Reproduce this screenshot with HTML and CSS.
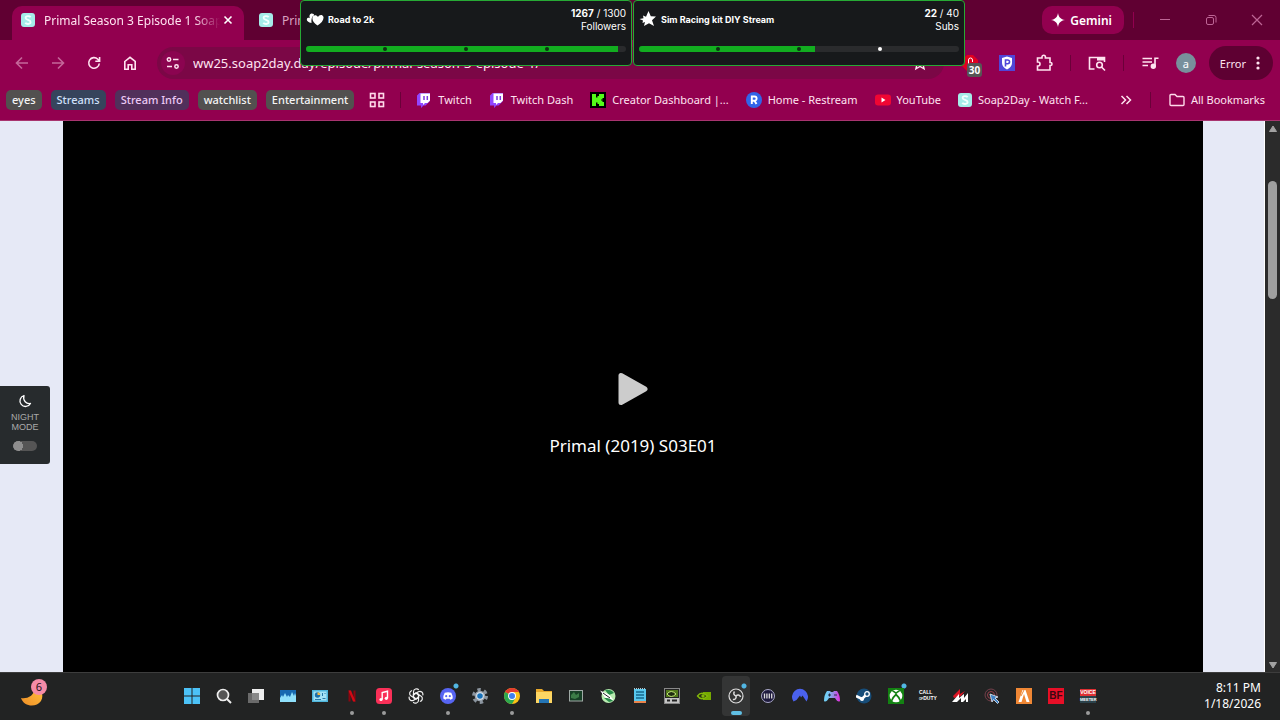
FILE: index.html
```html
<!DOCTYPE html>
<html lang="en">
<head>
    <meta charset="UTF-8">
    <meta name="viewport" content="width=device-width, initial-scale=1.0">
    <title>Primal Season 3 Episode 1 Soap2Day</title>
    <link rel="stylesheet" href="styles.css">
</head>
<body>

<!-- shared shapes -->
<svg class="defs" aria-hidden="true">
    <symbol id="soap" viewBox="0 0 14 14">
        <rect width="14" height="14" rx="3" fill="#a5ece9"/>
        <path d="M9.6 4.2C8.800 2.800 4.600 2.600 4.600 5c0 2.300 5 1.600 5 4.100 0 2.500-4.400 2.300-5.300.7" fill="none" stroke="#f2ffff" stroke-width="1.800"/>
    </symbol>
    <symbol id="twitch" viewBox="0 0 16 16">
        <path d="M1 3.500 3.500 1H14v8l-4.500 4.500H7.500L5 16v-2.500H1z" fill="#9146ff"/>
        <path d="M4.500 1.500H14V8.500l-2.500 2.500H9L7 13v-2H4.500z" fill="#fff"/>
        <path d="M8 4v4M11.300 4v4" stroke="#7a3ae0" stroke-width="1.500"/>
    </symbol>
</svg>

<div class="desktop">
    <header class="tabstrip">
        <div class="tab active">
            <svg class="favicon"><use href="#soap"/></svg>
            <span class="tab-title">Primal Season 3 Episode 1 Soap</span>
            <button class="tab-close" aria-label="Close tab"><svg width="10" height="10" viewBox="0 0 10 10"><path d="M1.500 1.500l7 7M8.500 1.500l-7 7" stroke="#fff" stroke-width="1.600"/></svg></button>
        </div>
        <div class="tab">
            <svg class="favicon"><use href="#soap"/></svg>
            <span class="tab-title">Prim</span>
        </div>
        <button class="gemini">
            <svg width="14" height="14" viewBox="0 0 14 14"><path d="M7 0c.7 4.300 2.700 6.300 7 7-4.300.7-6.300 2.700-7 7-.7-4.300-2.700-6.300-7-7 4.300-.7 6.300-2.700 7-7z" fill="#fff"/></svg>
            Gemini
        </button>
        <span class="divider strip-divider"></span>
        <div class="window-buttons">
            <button aria-label="Minimize"><svg width="12" height="12"><path d="M1 5.500h10" stroke="#bd6595"/></svg></button>
            <button aria-label="Restore"><svg width="12" height="12" fill="none" stroke="#bd6595"><rect x="1.500" y="3.500" width="7" height="7" rx="1.500"/><path d="M3.500 1.500h5.500a2 2 0 0 1 2 2v5"/></svg></button>
            <button aria-label="Close"><svg width="12" height="12"><path d="M1 1l10 10M11 1L1 11" stroke="#bd6595" stroke-width="1.200"/></svg></button>
        </div>
    </header>

    <nav class="toolbar">
        <button class="icon-button dim" aria-label="Back"><svg viewBox="0 0 16 16"><path d="M14 8H3M8 2.500L2.500 8 8 13.500"/></svg></button>
        <button class="icon-button dim" aria-label="Forward"><svg viewBox="0 0 16 16"><path d="M2 8h11M8 2.500L13.500 8 8 13.500"/></svg></button>
        <button class="icon-button" aria-label="Reload"><svg viewBox="0 0 16 16"><path d="M13.300 8.500A5.300 5.300 0 1 1 11.800 4.200L13.300 5.800M13.600 2v4.300H9.300"/></svg></button>
        <button class="icon-button" aria-label="Home"><svg viewBox="0 0 16 16"><path d="M2.800 6.500L8 2.300l5.200 4.200v7.700H9.800V9.800H6.200v4.400H2.800z"/></svg></button>
        <div class="omnibox">
            <button class="site-info" aria-label="Site information"><svg width="16" height="16" viewBox="0 0 16 16" fill="none" stroke="#ffe3f0" stroke-width="1.500"><circle cx="4" cy="4.500" r="1.700"/><path d="M8 4.500h5.500M2 11.500h5"/><circle cx="11.500" cy="11.500" r="1.700"/></svg></button>
            <input class="url" type="text" aria-label="Address" value="ww25.soap2day.day/episode/primal-season-3-episode-1/">
            <button class="star" aria-label="Bookmark this tab"><svg width="16" height="16" viewBox="0 0 16 16" fill="none" stroke="#ffe3f0" stroke-width="1.400"><path d="M8 1.500l1.900 4.300 4.600.4-3.500 3.100 1.100 4.600L8 11.500l-4.100 2.400L5 9.300 1.500 6.200l4.600-.4z"/></svg></button>
        </div>
        <div class="extensions">
            <button class="blocker" aria-label="Ad blocker">
                <svg width="16" height="16" viewBox="0 0 16 16"><path d="M5 0h6l5 5v6l-5 5H5l-5-5V5z" fill="#e0001f"/><path d="M6.500 9V5a2 2 0 0 1 4 0v2" fill="none" stroke="#fff"/></svg>
                <span class="count">30</span>
            </button>
            <button class="icon-button" aria-label="Password shield"><svg viewBox="0 0 16 16"><rect width="16" height="16" fill="#5046d8" stroke="none"/><path d="M3 3l5-1.500L13 3v5c0 3-2 5-5 6.500C5 13 3 11 3 8z" fill="#fff" stroke="none"/><path d="M6.500 11.500V5h2.200a1.800 1.800 0 0 1 0 3.700H6.500" stroke="#5046d8"/></svg></button>
            <button class="icon-button" aria-label="Extensions"><svg class="big" viewBox="0 0 18 18"><path d="M2.500 4H7V3a1.700 1.700 0 0 1 3.400 0v1H15v4.500h.5a1.500 1.500 0 0 1 0 3H15V16H2.500v-4H3a2 2 0 0 0 0-4h-.5z"/></svg></button>
            <span class="divider"></span>
            <button class="icon-button" aria-label="Search this page"><svg class="big" viewBox="0 0 18 18"><path d="M6.500 15H1.500V3.500h15V8"/><path d="M9 3v3.500h7.500V3z" fill="#ffe3f0" stroke="none"/><circle cx="11.500" cy="11" r="2.800"/><path d="M13.500 13l3.500 3.500"/></svg></button>
            <span class="divider"></span>
            <button class="icon-button" aria-label="Media controls"><svg class="big" viewBox="0 0 18 18"><path d="M1.500 4.500H11M1.500 8H11M1.500 11.500h5.500M14 12V4.300h3.500"/><circle cx="12.300" cy="12.300" r="1.900" fill="#ffe3f0"/></svg></button>
            <button class="avatar" aria-label="Profile">a</button>
            <button class="error-menu">Error
                <svg width="4" height="16" viewBox="0 0 4 16" fill="#ffe3f0"><circle cx="2" cy="3" r="1.600"/><circle cx="2" cy="8" r="1.600"/><circle cx="2" cy="13" r="1.600"/></svg>
            </button>
        </div>
    </nav>

    <nav class="bookmarks">
        <div class="groups">
            <button class="chip gray">eyes</button>
            <button class="chip blue">Streams</button>
            <button class="chip purple">Stream Info</button>
            <button class="chip gray">watchlist</button>
            <button class="chip gray">Entertainment</button>
        </div>
        <button class="apps" aria-label="Apps"><svg width="16" height="16" viewBox="0 0 16 16" fill="none" stroke="#ffd9ea" stroke-width="1.600"><rect x="1.500" y="1.500" width="4.500" height="4.500"/><rect x="10" y="1.500" width="4.500" height="4.500"/><rect x="1.500" y="10" width="4.500" height="4.500"/><rect x="10" y="10" width="4.500" height="4.500"/></svg></button>
        <span class="divider"></span>
        <div class="links">
            <a href="#"><svg><use href="#twitch"/></svg>Twitch</a>
            <a href="#"><svg><use href="#twitch"/></svg>Twitch Dash</a>
            <a href="#"><svg viewBox="0 0 16 16"><rect width="16" height="16" fill="#000"/><path d="M2 2h4v3.500h1.500V4H9V2h5v4h-1.500v1.500H11v1h1.500V10H14v4H9v-2H7.500v-1.500H6V14H2z" fill="#53fc18"/></svg>Creator Dashboard |...</a>
            <a href="#"><svg viewBox="0 0 16 16"><circle cx="8" cy="8" r="8" fill="#3264e8"/><path d="M5.800 12V4.500h2.700a2 2 0 0 1 0 4.200H6M8.500 8.700l2 3.300" fill="none" stroke="#fff" stroke-width="1.900"/></svg>Home - Restream</a>
            <a href="#"><svg viewBox="0 0 16 16"><rect y="2.500" width="16" height="11" rx="3" fill="#f00633"/><path d="M6.500 5.500l4 2.500-4 2.500z" fill="#fff"/></svg>YouTube</a>
            <a href="#"><svg class="favicon"><use href="#soap"/></svg>Soap2Day - Watch F...</a>
        </div>
        <button class="more" aria-label="More bookmarks"><svg width="12" height="10" viewBox="0 0 12 10" fill="none" stroke="#ffe3f0" stroke-width="1.500"><path d="M1.500 1l4 4-4 4M6.500 1l4 4-4 4"/></svg></button>
        <span class="divider"></span>
        <a class="all" href="#"><svg viewBox="0 0 16 16" fill="none" stroke="#ffd9ea" stroke-width="1.400"><path d="M1 3.500a1 1 0 0 1 1-1h4l2 2h6a1 1 0 0 1 1 1v7a1 1 0 0 1-1 1H2a1 1 0 0 1-1-1z"/></svg>All Bookmarks</a>
    </nav>

    <main class="page">
        <label class="night-mode" for="night">
            <svg width="14" height="14" viewBox="0 0 14 14"><path d="M6 1.500a5.600 5.600 0 1 0 6.500 8C8.500 10.500 4.500 6.500 6 1.500z" fill="none" stroke="#fff" stroke-width="1.300" stroke-linejoin="round"/></svg>
            <span>NIGHT<br>MODE</span>
            <input type="checkbox" id="night">
        </label>
        <section class="player">
            <button class="play" aria-label="Play"><svg width="30" height="34" viewBox="0 0 30 34"><path d="M3 3.500v27L27 17z" fill="#ccc" stroke="#ccc" stroke-width="5" stroke-linejoin="round"/></svg></button>
            <h1>Primal (2019) S03E01</h1>
        </section>
        <div class="scrollbar">
            <svg width="10" height="8" viewBox="0 0 10 8"><path d="M5 1l3.500 5.500h-7z" fill="#a2a2a2" stroke="#a2a2a2" stroke-linejoin="round"/></svg>
            <div class="track"><div class="thumb"></div></div>
            <svg width="10" height="8" viewBox="0 0 10 8"><path d="M5 7l3.500-5.500h-7z" fill="#a2a2a2" stroke="#a2a2a2" stroke-linejoin="round"/></svg>
        </div>
    </main>

    <footer class="taskbar">
        <button class="weather" aria-label="Weather">
            <svg width="24" height="20" viewBox="0 0 24 20"><defs><linearGradient id="moon" x1="0" y1="1" x2="1" y2="0"><stop offset="0" stop-color="#ef8d27"/><stop offset="1" stop-color="#ffc23d"/></linearGradient></defs><path d="M0 12c5 1 14-1 14-12 7 3 9 10 6 15-5 7-17 6-20-3z" fill="url(#moon)"/></svg>
            <span class="alerts">6</span>
        </button>
        <div class="apps-row">
            <button class="app" aria-label="Start"><svg viewBox="0 0 16 16" fill="#4cc2f7"><path d="M0 0h7.500v7.500H0zM8.500 0H16v7.500H8.500zM0 8.500h7.500V16H0zM8.500 8.500H16V16H8.500z"/></svg></button>
            <button class="app" aria-label="Search"><svg viewBox="0 0 16 16"><circle cx="7" cy="7" r="5.500" fill="#555" stroke="#eee" stroke-width="1.700"/><path d="M11 11l4 4" stroke="#eee" stroke-width="2"/></svg></button>
            <button class="app" aria-label="Task view"><svg viewBox="0 0 16 16"><rect x="4" y="1" width="12" height="11" fill="#eee"/><rect y="5" width="11" height="10" fill="#777" opacity=".85"/></svg></button>
            <button class="app" aria-label="Task manager"><svg viewBox="0 0 16 16"><rect y="2" width="16" height="12" fill="#1769b0"/><path d="M0 14V10l2-3 1 2 2-4 2 4 1-2 2 2 2-5 2 4 1-3 1 3v6z" fill="#8fe0fb"/></svg></button>
            <button class="app" aria-label="Control panel"><svg viewBox="0 0 16 16"><rect y="2" width="16" height="12" fill="#4eb6dc"/><rect x="1.500" y="3.500" width="13" height="9" fill="#a5e2f5"/><circle cx="5.500" cy="7" r="2.700" fill="#1b6fab"/><path d="M5.500 7V4.300A2.700 2.700 0 0 1 8.200 7z" fill="#f5b942"/><path d="M3 11.500h6M10.500 5v3M13 5v1M10.500 10.500h3" stroke="#287aa9"/></svg></button>
            <button class="app running" aria-label="Netflix"><svg viewBox="0 0 16 16"><path d="M5.500 2.500v11M10.500 2.500v11" stroke="#8a0710" stroke-width="2"/><path d="M4.500 2.500h2.500l4.500 11H9z" fill="#d40914"/></svg></button>
            <button class="app running" aria-label="Music"><svg viewBox="0 0 16 16"><rect width="16" height="16" rx="3.500" fill="#fa3058"/><path d="M6.200 11.500V4.500l5.300-1.300v7" fill="none" stroke="#fff" stroke-width="1.400"/><circle cx="5" cy="11.500" r="1.600" fill="#fff"/><circle cx="10.300" cy="10.300" r="1.600" fill="#fff"/></svg></button>
            <button class="app" aria-label="ChatGPT"><svg viewBox="0 0 16 16" fill="none" stroke="#f2f2f2" stroke-width="1.200"><g id="petal"><path d="M8 5.200L5.500 6.600V3.800a3 3 0 0 1 5.300-1.900M5.500 6.600v3L8 11"/></g><use href="#petal" transform="rotate(60 8 8)"/><use href="#petal" transform="rotate(120 8 8)"/><use href="#petal" transform="rotate(180 8 8)"/><use href="#petal" transform="rotate(240 8 8)"/><use href="#petal" transform="rotate(300 8 8)"/></svg></button>
            <button class="app running notify" aria-label="Discord"><svg viewBox="0 0 16 16"><circle cx="8" cy="8" r="8" fill="#5765f2"/><path d="M4.700 4.800Q8 3.700 11.300 4.800 13 8 12.700 10.500q-1.200 1-2.500 1.200l-.6-1H6.400l-.6 1Q4.500 11.500 3.300 10.500 3 8 4.700 4.800z" fill="#fff"/><circle cx="6.200" cy="8.200" r="1.100" fill="#5765f2"/><circle cx="9.800" cy="8.200" r="1.100" fill="#5765f2"/></svg></button>
            <button class="app" aria-label="Settings"><svg viewBox="0 0 16 16"><circle cx="8" cy="8" r="6.500" fill="none" stroke="#8b949e" stroke-width="3" stroke-dasharray="3.400 3.400"/><circle cx="8" cy="8" r="5.300" fill="#9aa3ad"/><circle cx="8" cy="8" r="3.700" fill="#e6eef5"/><circle cx="8" cy="8" r="2.800" fill="#1770b8"/></svg></button>
            <button class="app running" aria-label="Chrome"><svg viewBox="0 0 16 16"><circle cx="8" cy="8" r="8" fill="#fbc116"/><path d="M8 8L1.100 4A8 8 0 0 1 14.900 4z" fill="#e33b2e"/><path d="M8 8L1.100 4A8 8 0 0 0 8 16l3.500-6z" fill="#2da94f"/><path d="M8 4h6.900L11 9z" fill="#fbc116"/><circle cx="8" cy="8" r="4" fill="#fff"/><circle cx="8" cy="8" r="3" fill="#3f80ee"/></svg></button>
            <button class="app" aria-label="File Explorer"><svg viewBox="0 0 16 16"><path d="M0 1h6l2 2h8v12H0z" fill="#e9a92b"/><path d="M0 4h16v11H0z" fill="#fdd663"/><path d="M3 15v-4h10v4z" fill="#2475b5"/></svg></button>
            <button class="app" aria-label="Monitor"><svg viewBox="0 0 16 16"><rect x="1.500" y="2.500" width="13" height="10.500" fill="#174026" stroke="#9fa9a5"/><path d="M3 7l3-3 2 3 3-2v4l-4 2-4-1z" fill="#3b7c47"/></svg></button>
            <button class="app" aria-label="Tuner"><svg viewBox="0 0 16 16"><circle cx="8.500" cy="8" r="7" fill="#b9ecb0"/><path d="M5 2q6-1 9 3L9 7zM4 10l5 4 4-1-3-3z" fill="#288b4a"/><path d="M0 2.500l9 4 5 6-5-2-4-1z" fill="#fff"/><path d="M3 5l7 5" stroke="#222"/></svg></button>
            <button class="app" aria-label="Notepad"><svg viewBox="0 0 16 16"><rect x="2" y="1" width="12" height="12" fill="#57c7ed"/><path d="M4 4h8M4 7h8M4 10h8" stroke="#17698d" stroke-width="1.300"/><path d="M2 13h12v2H2z" fill="#e8834b"/><path d="M2 .7h12" stroke="#d4edf5" stroke-dasharray="1 1"/></svg></button>
            <button class="app" aria-label="Nvidia control"><svg viewBox="0 0 16 16"><rect x=".5" y=".5" width="15" height="15" fill="#222" stroke="#888"/><path d="M2 2h12v7H2z" fill="#507719"/><path d="M3 6q4-5 9 0-5 5-9 0z" fill="#1f2b10" stroke="#c3e47a"/><path d="M1 10h14v5H1z" fill="#c4c4c4"/><path d="M3 12.500h3M8 12.500h5" stroke="#222" stroke-width="2"/></svg></button>
            <button class="app" aria-label="Nvidia"><svg viewBox="0 0 16 16"><path d="M7 4h8v8H7z" fill="#76a900"/><path d="M1.500 8q4-5.500 10 0-6 5.500-10 0z" fill="#293410" stroke="#83b80a" stroke-width="1.300"/><circle cx="7" cy="8" r="1.700" fill="#83b80a"/></svg></button>
            <button class="app current notify" aria-label="OBS Studio"><svg viewBox="0 0 16 16" fill="none" stroke="#ddd"><circle cx="8" cy="8" r="7" stroke-width="1.200"/><path id="blade" d="M8 8C6 7.500 5 5.500 6.500 3.500" stroke-width="1.500"/><use href="#blade" transform="rotate(120 8 8)"/><use href="#blade" transform="rotate(240 8 8)"/></svg></button>
            <button class="app" aria-label="Audio mixer"><svg viewBox="0 0 16 16"><circle cx="8" cy="8" r="6.500" fill="#1e1a3d" stroke="#aaa9c9"/><path d="M4.500 5.500v5M6.900 5.500v5M9.300 5.500v5M11.700 5.500v5" stroke="#ddd" stroke-width="1.300"/></svg></button>
            <button class="app" aria-label="NordVPN"><svg viewBox="0 0 16 16"><path d="M1.500 13.500A8 8 0 1 1 14.500 13.500L10.500 7.500 9 9.500 8 7.500 4.500 12z" fill="#4a61ed"/></svg></button>
            <button class="app" aria-label="Controller"><svg viewBox="0 0 16 16"><defs><linearGradient id="pad"><stop offset=".2" stop-color="#72cdf4"/><stop offset=".6" stop-color="#9b86e5"/><stop offset="1" stop-color="#e72bdf"/></linearGradient></defs><path d="M3 3h3l1 1h2l1-1h3q3 4 3 10-2 2-5-3H5q-3 5-5 3 0-6 3-10z" fill="url(#pad)"/><path d="M4 7h3M5.500 5.500v3M10 7h3" stroke="#253044"/></svg></button>
            <button class="app" aria-label="Steam"><svg viewBox="0 0 16 16"><circle cx="8" cy="8" r="7.500" fill="#174d79"/><path d="M0 8l6 3 5-5" stroke="#fff" stroke-width="2.600" fill="none"/><circle cx="11" cy="6" r="2.300" fill="#174d79" stroke="#fff" stroke-width="1.300"/><circle cx="6" cy="11" r="2" fill="#fff"/></svg></button>
            <button class="app notify" aria-label="Xbox"><svg viewBox="0 0 16 16"><rect width="16" height="16" fill="#138212"/><circle cx="8" cy="8" r="6.300" fill="#fff"/><path d="M3.500 13Q5 9 8 6.500 11 9 12.500 13M4.500 3Q6.500 3.500 8 5.200 9.500 3.500 11.500 3" fill="none" stroke="#138212" stroke-width="1.700"/></svg></button>
            <button class="app word cod" aria-label="Call of Duty"><span>CALL</span><span><small>OF</small>DUTY</span></button>
            <button class="app" aria-label="Assetto Corsa"><svg viewBox="0 0 16 16"><path d="M1 8l7-7v5l5-3-4 5-7 2z" fill="#db1524"/><path d="M0 14L7 6v4l5-4v4l4-5v9h-2v-3l-3 3H9v-4l-4 4z" fill="#fff"/></svg></button>
            <button class="app" aria-label="Auto clicker"><svg viewBox="0 0 16 16"><circle cx="7" cy="7" r="6" fill="none" stroke="#74404b"/><circle cx="7" cy="7" r="3.500" fill="none" stroke="#963e4b"/><path d="M6 6l8 3-3 1 4 4-1.500 1.500-4-4L8 14z" fill="#3f82c5" stroke="#e7eef5" stroke-width=".8"/></svg></button>
            <button class="app" aria-label="FiveM"><svg viewBox="0 0 16 16"><rect width="16" height="16" fill="#ef8735"/><path d="M2.500 14L6.500 2h3l4 12h-3L8 6l-2.500 8z" fill="#fff"/><path d="M8 2l-3 6" stroke="#ef8735"/></svg></button>
            <button class="app word bf" aria-label="Battlefield"><span>BF</span></button>
            <button class="app word voice running" aria-label="Voicemeeter"><span>VOICE</span><span>MEETER</span></button>
        </div>
        <time class="clock" datetime="2026-01-18T20:11">8:11 PM<br>1/18/2026</time>
    </footer>

    <!-- stream goals sit over the browser window -->
    <aside class="goals">
        <section class="goal">
            <div class="goal-head">
                <svg width="18" height="16" viewBox="0 0 18 16" fill="#fff"><path d="M11.500 14.500C7.500 11.500 6 9 6.500 6.500 7.200 3.700 10.500 3.500 12 6c1-2.500 4.500-3 5.400-.3.8 3-2 6.500-5.900 8.800z"/><path d="M5.500 12C2.500 11.500.5 10 .8 8.300 1.200 6.700 3 6.500 4 7.300 3 5.500 3.300 3 5.300 2.500 7 2.200 8 3.200 8.200 4.200 6 5 5 8 5.500 12z"/></svg>
                <h2>Road to 2k</h2>
                <p><b>1267</b> / 1300<br>Followers</p>
            </div>
            <div class="bar">
                <div class="fill" style="width: 97.5%"></div>
                <div class="marks"><i></i><i></i><i></i></div>
            </div>
        </section>
        <section class="goal">
            <div class="goal-head">
                <svg width="18" height="16" viewBox="0 0 18 16" fill="#fff"><path d="M9.500 0l2.300 5.200 5.200.3-4 3.700 2 5.800-5-2.800L5 15l1-4-2.500 1L4 9.500.5 8l4-.8L4 4.500l3 1.300z"/></svg>
                <h2>Sim Racing kit DIY Stream</h2>
                <p><b>22</b> / 40<br>Subs</p>
            </div>
            <div class="bar">
                <div class="fill" style="width: 55%"></div>
                <div class="marks"><i></i><i></i><i class="open"></i></div>
            </div>
        </section>
    </aside>
</div>

</body>
</html>
```

FILE: styles.css
```css
* {
    box-sizing: border-box;
}
body {
    margin: 0;
    font-family: "Noto Sans", "Open Sans", sans-serif;
    font-size: 12px;
    color: #ffe3f0;
}
button {
    display: flex;
    align-items: center;
    justify-content: center;
    padding: 0;
    border: none;
    background: none;
    color: inherit;
    font: inherit;
    cursor: pointer;
}
a {
    color: inherit;
    text-decoration: none;
}
svg {
    flex: none;
}
.defs {
    position: absolute;
    width: 0;
    height: 0;
}
.desktop {
    display: flex;
    flex-direction: column;
    height: 100vh;
    overflow: hidden;
}
.divider {
    flex: none;
    width: 1px;
    height: 16px;
    background-color: #6b0039;
}
.favicon {
    width: 14px;
    height: 14px;
}

/* tabs */
.tabstrip {
    display: flex;
    align-items: center;
    height: 40px;
    padding-left: 12px;
    background-color: #600032;
}
.tab {
    display: flex;
    align-items: center;
    gap: 9px;
    width: 232px;
    height: 34px;
    padding: 0 11px 6px 9px;
    align-self: flex-end;
}
.tab + .tab {
    margin-left: 6px;
    color: #d9a3c0;
}
.tab.active {
    background-color: #92004f;
    border-radius: 10px 10px 0 0;
}
.tab-title {
    flex: 1;
    min-width: 0;
    white-space: nowrap;
}
.tab.active .tab-title {
    margin-right: -6px;
    -webkit-mask-image: linear-gradient(to right, #000 85%, transparent);
    mask-image: linear-gradient(to right, #000 85%, transparent);
}
.gemini {
    gap: 5px;
    height: 28px;
    margin-left: auto;
    padding: 0 12px 0 9px;
    border-radius: 10px;
    background-color: #92004f;
    color: #fff;
    font-weight: 600;
}
.strip-divider {
    margin-left: 9px;
    background-color: #92004f;
}
.window-buttons {
    display: flex;
    margin-left: 8px;
}
.window-buttons button {
    width: 46px;
    height: 40px;
}

/* address bar row */
.toolbar {
    display: flex;
    align-items: center;
    gap: 8px;
    height: 46px;
    padding: 0 7px 0 8px;
    background-color: #92004f;
}
.icon-button {
    flex: none;
    width: 28px;
    height: 28px;
}
.icon-button svg {
    width: 16px;
    height: 16px;
    fill: none;
    stroke: #ffe3f0;
    stroke-width: 1.6;
}
.icon-button svg.big {
    width: 18px;
    height: 18px;
}
.icon-button.dim svg {
    stroke: #c5679a;
}
.omnibox {
    display: flex;
    flex: 1;
    align-items: center;
    gap: 8px;
    height: 32px;
    margin-left: 5px;
    padding: 0 16px 0 4px;
    border-radius: 16px;
    background-color: #7b0746;
}
.site-info {
    width: 24px;
    height: 24px;
    border-radius: 12px;
    background-color: #8b0450;
}
.url {
    flex: 1;
    min-width: 0;
    padding: 0;
    border: none;
    outline: none;
    background: none;
    color: #ffe3f0;
    font: inherit;
    font-size: 13px;
}
.extensions {
    display: flex;
    align-items: center;
    gap: 9px;
    margin-left: 10px;
}
.blocker {
    position: relative;
    width: 16px;
    height: 28px;
    margin-right: 6px;
}
.count {
    position: absolute;
    top: 14px;
    left: 5px;
    padding: 0 2px;
    border-radius: 3px;
    background-color: #565656;
    color: #fff;
    font-size: 10px;
    font-weight: bold;
    line-height: 14px;
}
.extensions .divider {
    margin: 0 3px;
}
.avatar {
    width: 20px;
    height: 20px;
    margin-left: 3px;
    border-radius: 50%;
    background-color: #78909c;
    color: #fff;
    font-size: 11px;
}
.error-menu {
    gap: 10px;
    height: 34px;
    margin-left: 4px;
    padding: 0 13px 0 11px;
    border-radius: 17px;
    background-color: #5e0032;
    font-size: 11px;
}

/* bookmarks row */
.bookmarks {
    display: flex;
    align-items: center;
    height: 35px;
    padding: 0 15px 7px 6px;
    border-bottom: 1px solid #a8346f;
    background-color: #92004f;
    font-size: 11px;
    white-space: nowrap;
}
.groups {
    display: flex;
    gap: 9px;
}
.chip {
    height: 20px;
    padding: 0 6px;
    border-radius: 5px;
    font-weight: 500;
}
.chip.gray {
    background-color: #52504f;
    color: #f5f5f5;
}
.chip.blue {
    background-color: #36445c;
    color: #cfe0fa;
}
.chip.purple {
    background-color: #51305b;
    color: #ecc9f5;
}
.apps {
    margin: 0 15px;
}
.links {
    display: flex;
    gap: 17px;
    margin-left: 15px;
}
.links a, .all {
    display: flex;
    align-items: center;
    gap: 6px;
}
.links svg, .all svg {
    width: 16px;
    height: 16px;
}
.links svg.favicon {
    width: 14px;
    height: 14px;
}
.more {
    margin: 0 18px 0 auto;
}
.all {
    margin-left: 18px;
}

/* web page */
.page {
    position: relative;
    display: flex;
    flex: 1;
    min-height: 0;
    padding-left: 63px;
    background-color: #e6e9f6;
}
.player {
    display: flex;
    flex: 1;
    flex-direction: column;
    align-items: center;
    justify-content: center;
    gap: 28px;
    margin-right: 61px;
    padding-top: 37px;
    background-color: #000;
}
.player h1 {
    margin: 0;
    color: #fff;
    font-size: 17px;
    font-weight: normal;
    line-height: 24px;
}
.night-mode {
    position: absolute;
    top: 265px;
    left: 0;
    display: flex;
    flex-direction: column;
    align-items: center;
    width: 50px;
    padding: 8px 0 13px;
    border-radius: 0 3px 3px 0;
    background-color: #272b2d;
    color: #aaa;
    font: 9px/10px "Liberation Sans", Arial, sans-serif;
    text-align: center;
}
.night-mode span {
    margin: 4px 0 9px;
}
.night-mode input {
    appearance: none;
    width: 24px;
    height: 10px;
    margin: 0;
    border-radius: 5px;
    background: radial-gradient(circle at 5px 5px, #8e8e8e 5px, #555 5px);
}
.scrollbar {
    display: flex;
    flex-direction: column;
    align-items: center;
    width: 16px;
    padding: 4px 0 3px;
    border-left: 1px solid #fff;
    background-color: #2b2b2b;
}
.track {
    flex: 1;
    padding-top: 48px;
}
.thumb {
    width: 9px;
    height: 118px;
    border-radius: 5px;
    background-color: #9f9f9f;
}

/* taskbar */
.taskbar {
    display: grid;
    grid-template-columns: 1fr auto 1fr;
    align-items: center;
    height: 48px;
    padding-bottom: 2px;
    border-top: 1px solid #3d3d3d;
    background-color: #222323;
    color: #fff;
}
.weather {
    position: relative;
    justify-self: start;
    width: 24px;
    height: 40px;
    margin-left: 21px;
}
.alerts {
    position: absolute;
    top: 3px;
    left: 10px;
    width: 16px;
    border-radius: 50%;
    background-color: #f58ba8;
    color: #221018;
    font-size: 11px;
    line-height: 16px;
}
.apps-row {
    display: flex;
}
.app {
    position: relative;
    width: 32px;
    height: 40px;
}
.app svg {
    width: 16px;
    height: 16px;
}
.app.current::before {
    content: "";
    position: absolute;
    inset: 0 2px;
    border-radius: 4px;
    background-color: #343535;
}
.app.current svg {
    position: relative;
}
.app.running::after, .app.current::after {
    content: "";
    position: absolute;
    bottom: 1px;
    width: 4px;
    height: 4px;
    border-radius: 2px;
    background-color: #9b9b9b;
}
.app.current::after {
    width: 11px;
    background-color: #60bfe3;
}
/* unread dot */
.app.notify {
    background: radial-gradient(circle at 24px 10px, #52b7e4 2px, transparent 3px);
}
.app.current.notify::before {
    background: radial-gradient(circle at 22px 10px, #52b7e4 2px, #343535 3px);
}
.word {
    flex-direction: column;
    font-family: "Liberation Sans", Arial, sans-serif;
    font-weight: bold;
}
.cod {
    align-items: flex-start;
    padding-left: 7px;
    font-size: 5px;
    line-height: 6px;
}
.cod small {
    font-size: 3px;
}
.bf span {
    width: 16px;
    background-color: #e80f27;
    color: #3a0710;
    font-size: 10px;
    line-height: 16px;
}
.voice span {
    width: 16px;
    background-color: #dd3033;
    font-size: 5px;
    line-height: 7px;
}
.voice span + span {
    background-color: #2b424b;
    font-size: 4px;
}
.clock {
    justify-self: end;
    padding-right: 19px;
    line-height: 16px;
    text-align: right;
}

/* stream goals */
.goals {
    position: absolute;
    top: 0;
    left: 50%;
    display: flex;
    gap: 1px;
    margin-left: -340px;
    color: #fff;
    font-family: Inter, sans-serif;
    font-size: 10px;
}
.goal {
    width: 332px;
    height: 66px;
    padding: 6px 5px 0;
    border: 1px solid #27aa35;
    border-radius: 4px;
    background-color: #17191b;
}
.goal-head {
    display: flex;
    align-items: flex-start;
    gap: 4px;
    height: 39px;
}
.goal-head svg {
    margin-top: 4px;
}
.goal h2 {
    flex: 1;
    margin: 0;
    font-size: 9px;
    font-weight: 700;
    line-height: 26px;
}
.goal p {
    margin: 0;
    line-height: 13px;
    text-align: right;
}
.bar {
    position: relative;
    height: 6px;
    border-radius: 3px;
    background-color: #2a2b2d;
    overflow: hidden;
}
.fill {
    height: 6px;
    background-color: #12ad20;
}
.marks {
    position: absolute;
    inset: 1px 0;
    display: flex;
    justify-content: space-evenly;
}
.marks i {
    width: 4px;
    height: 4px;
    border-radius: 2px;
    background-color: #102c14;
}
.marks .open {
    background-color: #fff;
}
```
